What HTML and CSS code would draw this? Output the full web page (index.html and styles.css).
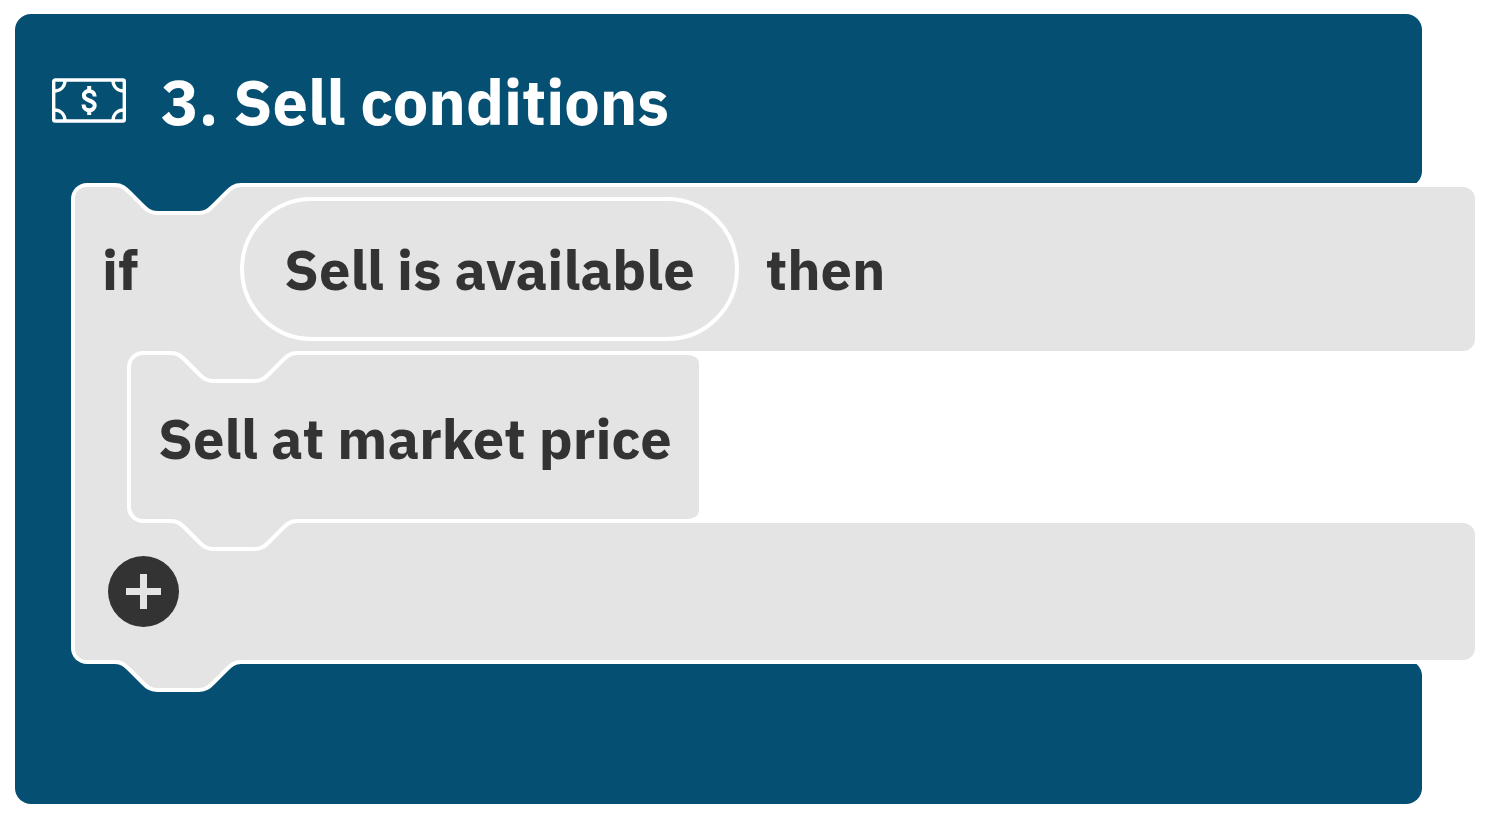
FILE: index.html
```html
<!DOCTYPE html>
<html lang="en">
<head>
<meta charset="utf-8">
<meta name="viewport" content="width=device-width, initial-scale=1">
<title>Sell conditions</title>
<link rel="stylesheet" href="styles.css">
</head>
<body>
<svg class="defs" aria-hidden="true">
  <symbol id="notch" viewBox="0 0 126 32">
    <path class="notch-fill" d="M0 0H126V2C119 2 115.500 5.500 112 9L98 23C94.500 26.500 91 30 84 30H42C35 30 31.500 26.500 28 23L14 9C10.500 5.500 7 2 0 2Z"/>
    <path class="notch-line" d="M126 2C119 2 115.500 5.500 112 9L98 23C94.500 26.500 91 30 84 30H42C35 30 31.500 26.500 28 23L14 9C10.500 5.500 7 2 0 2"/>
  </symbol>
</svg>
<main class="root-block">
  <header class="root-head">
    <svg class="money" viewBox="0 0 74 46" aria-hidden="true">
      <rect x="1.700" y="2" width="70.600" height="41" rx="1.500"/>
      <path d="M13 2C13 9 8.500 13 2 13M61 2C61 9 65.500 13 72 13M13 43C13 36 8.500 32 2 32M61 43C61 36 65.500 32 72 32"/>
      <path class="dollar" d="M42.700 18.500C42.700 11.500 31.900 11.500 31.900 17.500C31.900 23.500 42.700 21.500 42.700 27.500C42.700 34 31.500 34 31.500 26.500M37.200 8V13M37.200 32V37"/>
    </svg>
    <h1 class="title">3. Sell conditions</h1>
  </header>
  <div class="root-body">
    <section class="if-block">
      <svg class="notch notch-top on-root" aria-hidden="true"><use href="#notch"/></svg>
      <div class="if-head">
        <span class="if-word">if</span>
        <span class="pill">Sell is available</span>
        <span>then</span>
      </div>
      <div class="mouth">
        <div class="statement">
          <svg class="notch notch-top" aria-hidden="true"><use href="#notch"/></svg>
          Sell at market price
          <svg class="notch notch-bottom" aria-hidden="true"><use href="#notch"/></svg>
        </div>
      </div>
      <div class="if-foot">
        <button class="add" type="button" aria-label="Add condition">
          <svg viewBox="0 0 71 71" aria-hidden="true"><path d="M35.500 18V53M18 35.500H53"/></svg>
        </button>
      </div>
      <svg class="notch notch-bottom" aria-hidden="true"><use href="#notch"/></svg>
    </section>
  </div>
  <div class="root-foot"></div>
</main>
</body>
</html>
```
FILE: styles.css
```css
:root {
  --blue: #054f72;
  --gray: #e4e4e4;
  --ink: #333;
  --line: 4px;
}

* {
  box-sizing: border-box;
}

body {
  margin: 0;
  background: #fff;
  color: var(--ink);
  font-family: "IBM Plex Sans", "Noto Sans", sans-serif;
  font-size: 56px;
  font-weight: 700;
  line-height: 64px;
  white-space: nowrap;
}

.defs {
  position: absolute;
  width: 0;
  height: 0;
}

.root-block {
  margin: 14px 17px 18px 15px;
}

.root-head,
.root-foot {
  margin-right: 53px;
  background: var(--blue);
}

.root-head {
  display: flex;
  align-items: center;
  gap: 35px;
  min-height: 173px;
  padding: 0 37px;
  border-radius: 16px 16px 16px 0;
}

.root-foot {
  min-height: 144px;
  border-radius: 0 16px 16px 16px;
}

.money {
  flex: none;
  width: 74px;
  height: 46px;
  fill: none;
  stroke: #fff;
  stroke-width: 3.4;
}

.money .dollar {
  stroke-width: 4;
}

.title {
  margin: 0;
  color: #fff;
  font-size: 63px;
  line-height: 72px;
}

/* The blue strip runs behind the rounded left corners of the nested block. */
.root-body {
  position: relative;
  z-index: 1;
  margin: -4px 0;
  padding-left: 56px;
  background: linear-gradient(var(--blue), var(--blue)) left / 90px 100% no-repeat;
}

.if-block {
  position: relative;
  border: var(--line) solid #fff;
  border-right: 0;
  border-radius: 16px 0 0 16px;
  background: linear-gradient(var(--gray), var(--gray)) left / 80px 100% no-repeat #fff;
}

.if-head,
.if-foot {
  display: flex;
  align-items: center;
  background: var(--gray);
  border-radius: 12px;
}

.if-head {
  padding: 10px 27px;
}

.if-word {
  width: 138px;
}

.pill {
  margin-right: 27px;
  padding: 36px 40px;
  border: var(--line) solid #fff;
  border-radius: 72px;
}

.mouth {
  display: flex;
  padding-left: 52px;
}

.statement {
  position: relative;
  z-index: 1;
  padding: 51px 27px 49px;
  border: var(--line) solid #fff;
  border-right: 0;
  border-radius: 16px 12px 12px 16px;
  background: var(--gray);
}

.if-foot {
  min-height: 137px;
  padding: 0 33px;
}

.notch {
  position: absolute;
  left: 40px;
  width: 126px;
  height: 32px;
  fill: var(--gray);
}

.notch-top {
  top: -4px;
}

.notch-bottom {
  bottom: -32px;
}

.on-root {
  fill: var(--blue);
}

.notch-line {
  fill: none;
  stroke: #fff;
  stroke-width: 4;
}

.add {
  width: 71px;
  height: 71px;
  padding: 0;
  border: 0;
  border-radius: 50%;
  background: var(--ink);
  cursor: pointer;
}

.add svg {
  display: block;
  width: 100%;
  height: 100%;
  fill: none;
  stroke: var(--gray);
  stroke-width: 7;
}
```
